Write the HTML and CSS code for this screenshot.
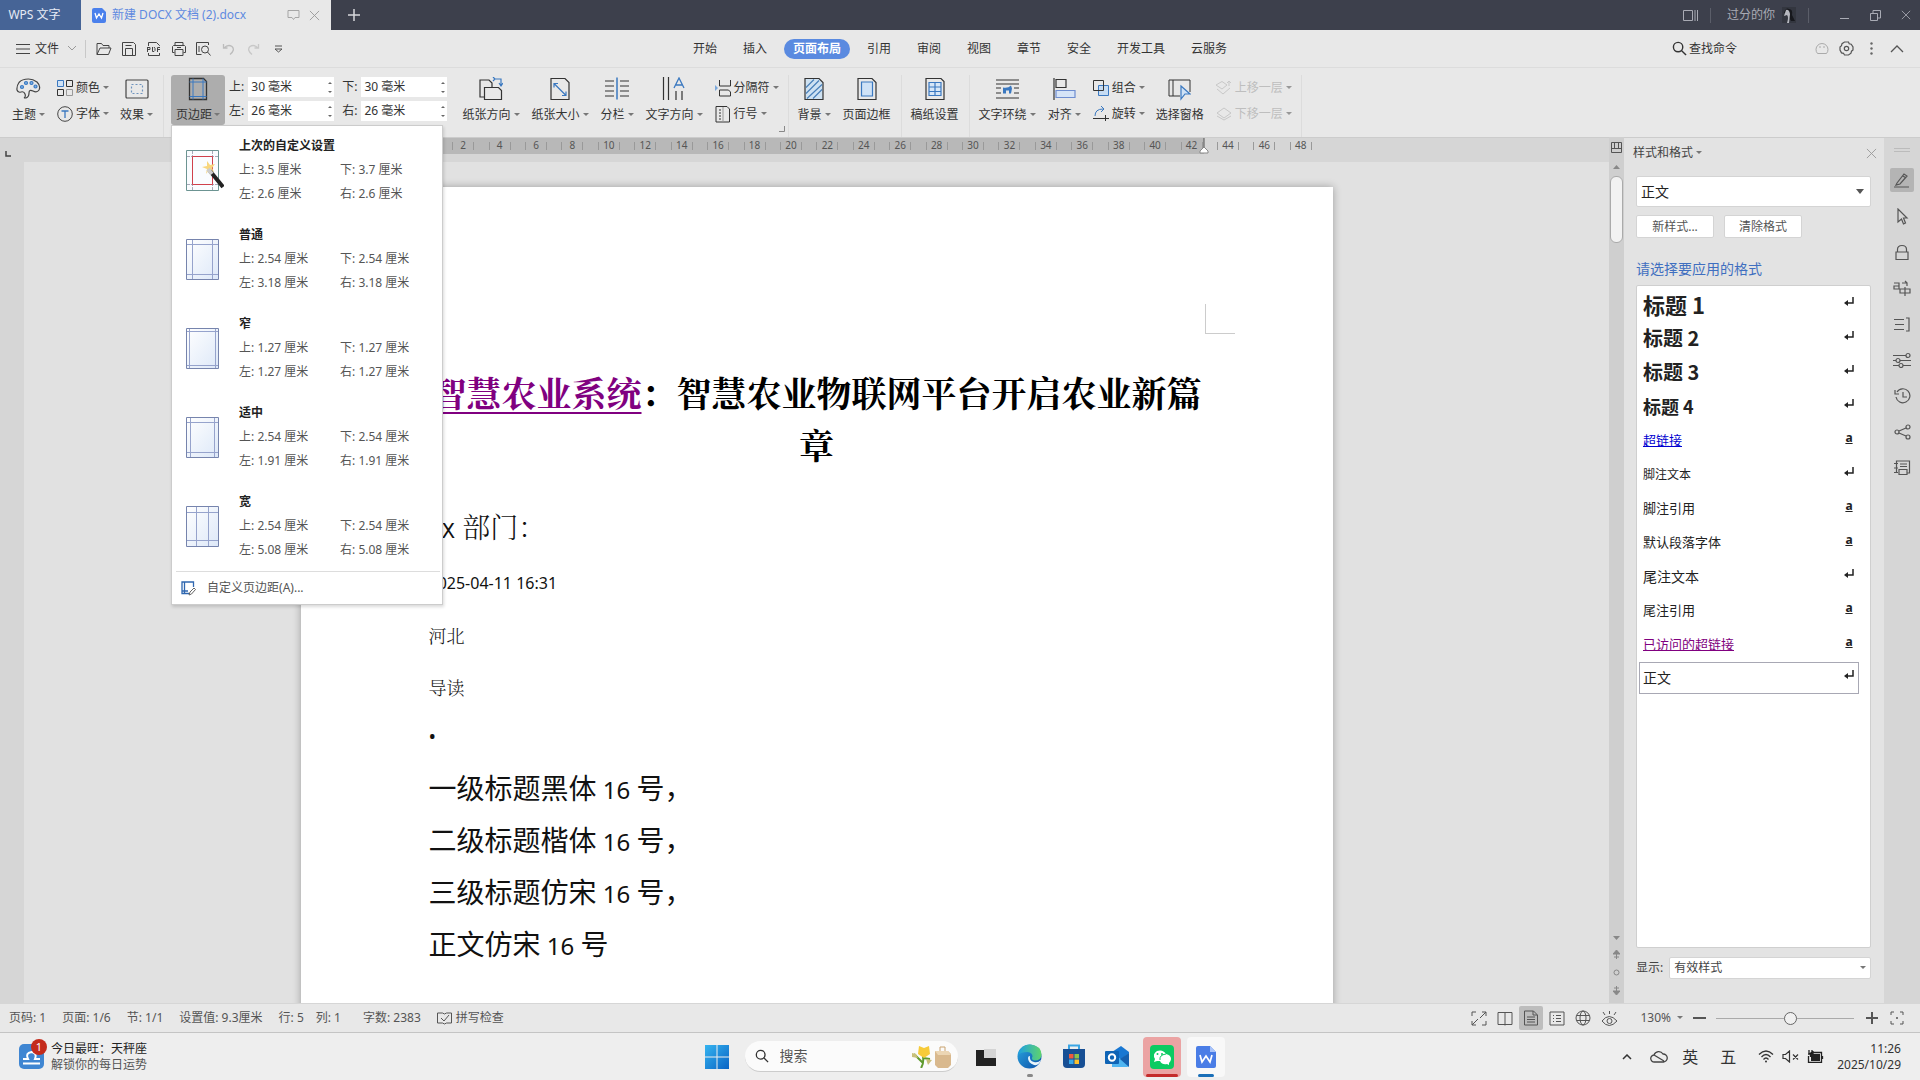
FILE: index.html
```html
<!DOCTYPE html>
<html lang="zh-CN">
<head>
<meta charset="utf-8">
<title>新建 DOCX 文档 (2).docx - WPS 文字</title>
<link rel="stylesheet" href="styles.css">
</head>
<body>
<svg class="defs" width="0" height="0" aria-hidden="true">
  <defs>
    <linearGradient id="sheet" x1="0" y1="0" x2="1" y2="1"><stop offset="0" stop-color="#fff"/><stop offset="1" stop-color="#dde8f8"/></linearGradient>
    <linearGradient id="win" x1="0" y1="0" x2="1" y2="1"><stop offset="0" stop-color="#35b4f0"/><stop offset="1" stop-color="#0a63c4"/></linearGradient>
    <linearGradient id="edge" x1="0" y1="0" x2="1" y2="1"><stop offset="0" stop-color="#2aa7e0"/><stop offset="1" stop-color="#0c4fa8"/></linearGradient>
    <linearGradient id="edgeTop" x1="0" y1="0" x2="1" y2="0"><stop offset="0" stop-color="#1d9fe2"/><stop offset="1" stop-color="#5fd46c"/></linearGradient>
    <symbol id="tri" viewBox="0 0 6 4"><path d="M0 0h6L3 3z" fill="#777"/></symbol>
    <symbol id="enter" viewBox="0 0 12 12"><path d="M10 1v6H4" fill="none" stroke="#222" stroke-width="1.5"/><path d="M5 4v6L1 7z" fill="#222"/></symbol>
    <symbol id="cross" viewBox="0 0 12 12"><path d="M1 1l10 10M11 1L1 11" fill="none" stroke="currentColor"/></symbol>
    <symbol id="mag" viewBox="0 0 16 16"><circle cx="6.500" cy="6.500" r="5" fill="none" stroke="currentColor" stroke-width="1.500"/><path d="M10.300 10.300L15 15" stroke="currentColor" stroke-width="1.500"/></symbol>
    <symbol id="wlogo" viewBox="0 0 14 15"><path d="M2 0h8l4 4v9a2 2 0 01-2 2H2a2 2 0 01-2-2V2a2 2 0 012-2z" fill="#4a80ec"/><path d="M3 5l1.500 5L7 6l2.500 4L11 5" fill="none" stroke="#fff" stroke-width="1.300"/></symbol>
  </defs>
</svg>

<div class="app">
  <header class="titlebar">
    <button class="home-tab">WPS 文字</button>
    <div class="doc-tab">
      <svg width="14" height="15"><use href="#wlogo"/></svg>
      <span class="doc-name">新建 DOCX 文档 (2).docx</span>
      <svg width="13" height="12" viewBox="0 0 13 12" fill="none" stroke="#a5a5a5"><path d="M1 1.500h11v7H8l-1.500 2-1.500-2H1z"/></svg>
      <button class="plain gray" aria-label="关闭标签"><svg width="11" height="11"><use href="#cross"/></svg></button>
    </div>
    <button class="plain new-tab" aria-label="新建标签"><svg width="12" height="12" viewBox="0 0 12 12" stroke="#d8d8dc" stroke-width="1.500"><path d="M6 0v12M0 6h12"/></svg></button>
    <div class="title-right">
      <svg width="15" height="13" viewBox="0 0 15 13" fill="none" stroke="#a9abb4"><path d="M.5 1.500h9v10h-9zM12 1v11M14.500 1v11"/></svg>
      <i class="vline dark"></i>
      <span class="user">过分的你</span>
      <svg class="avatar" width="14" height="16" viewBox="0 0 14 16"><rect width="14" height="16" fill="#33363f"/><path d="M2 6Q4 0 7 2Q11 2 10 8Q12 12 13 14H9Q7 11 7 8Q5 8 5 6Z" fill="#17181d"/><path d="M4 3q3-1 4 4l-1 9H5q2-6 0-8L2 9z" fill="#b6b8bf"/></svg>
      <i class="vline dark"></i>
      <button class="plain win" aria-label="最小化"><svg width="11" height="11" viewBox="0 0 11 11"><path d="M1 8.500h9" stroke="#a9abb4"/></svg></button>
      <button class="plain win" aria-label="还原"><svg width="11" height="11" viewBox="0 0 11 11" fill="none" stroke="#a9abb4"><path d="M.5 3.500h7v7h-7zM3 3V.5h7.500V8H8"/></svg></button>
      <button class="plain win" aria-label="关闭"><svg width="10" height="10"><use href="#cross"/></svg></button>
    </div>
  </header>

  <nav class="menubar">
    <div class="quick">
      <button class="plain file"><svg width="14" height="12" viewBox="0 0 14 12" stroke="#444"><path d="M0 1.500h14M0 6h14M0 10.500h14"/></svg>文件<svg class="caret" width="8" height="5" viewBox="0 0 8 5" fill="none" stroke="#999"><path d="M0 0l4 4 4-4"/></svg></button>
      <i class="vline"></i>
      <button class="plain q" aria-label="打开"><svg width="16" height="14" viewBox="0 0 16 14" fill="none" stroke="#444"><path d="M1 12.500V1.500h4.500l1.500 2h6v2.500M1 12.500l3-6.500h11l-2.500 6.500z"/></svg></button>
      <button class="plain q" aria-label="保存"><svg width="14" height="14" viewBox="0 0 14 14" fill="none" stroke="#444"><path d="M.5.5h11l2 2v11H.5zM3.500 13V6.500h7V13M3.500 3.500h6"/></svg></button>
      <button class="plain q" aria-label="输出为PDF"><svg width="14" height="14" viewBox="0 0 14 14" fill="none" stroke="#444"><path d="M1.500 4V.5h8l3 3V4M1.500 11v2.500h11V11M.5 5v5M1 5.500h2v2H1M5.500 5v4.500h1.500l1-1v-2l-1-1.500M10.500 10V5.500H13M10.500 7.500H13"/></svg></button>
      <button class="plain q" aria-label="打印"><svg width="14" height="14" viewBox="0 0 14 14" fill="none" stroke="#444"><path d="M3 3.500v-3h8v3M2.500 10.500H.5v-6l1-1h11l1 1v6h-2M3 7.500h8v6H3zM5 5.500h4"/></svg></button>
      <button class="plain q" aria-label="打印预览"><svg width="15" height="14" viewBox="0 0 15 14" fill="none" stroke="#444"><path d="M12.500 3V.5H.5v12h5M3 4v6"/><circle cx="9" cy="7.500" r="3.500"/><path d="M11.500 10l3 3.500"/></svg></button>
      <button class="plain q" aria-label="撤销"><svg width="13" height="12" viewBox="0 0 13 12" fill="none" stroke="#bcbcbc" stroke-width="1.300"><path d="M1.500 1v4h4M2 5q4-4 8-1.500 3.500 3.500-2 8"/></svg></button>
      <button class="plain q" aria-label="恢复"><svg width="13" height="12" viewBox="0 0 13 12" fill="none" stroke="#c8c8c8" stroke-width="1.300"><path d="M11.500 1v4h-4M11 5Q7 1 3 3.500-.5 7 5 11.500"/></svg></button>
      <button class="plain q" aria-label="自定义快速访问"><svg width="9" height="8" viewBox="0 0 9 8" fill="none" stroke="#555"><path d="M1 1h7M1 4l3.500 3L8 4z"/></svg></button>
    </div>
    <div class="tabs">
      <button>开始</button><button>插入</button><button class="on">页面布局</button><button>引用</button><button>审阅</button><button>视图</button><button>章节</button><button>安全</button><button>开发工具</button><button>云服务</button>
    </div>
    <div class="menu-right">
      <button class="plain find"><svg width="15" height="15"><use href="#mag"/></svg>查找命令</button>
      <button class="plain q" aria-label="反馈"><svg width="14" height="14" viewBox="0 0 14 14" fill="none" stroke="#aaa"><path d="M2.500 11.500a6 6 0 119 0zM5 4v2M9 4v2"/></svg></button>
      <button class="plain q" aria-label="设置"><svg width="15" height="15" viewBox="0 0 15 15" fill="none" stroke="#555" stroke-width="1.200"><path d="M5.500 1h4l.7 1.800 2 .4L14 6v3l-1.500 1.200-.5 2L9.500 14h-4l-1-1.700-2-.4L1 9V6l1.500-1.300.5-2z"/><circle cx="7.500" cy="7.500" r="2.200"/></svg></button>
      <button class="plain q" aria-label="更多"><svg width="3" height="13" viewBox="0 0 3 13" fill="#666"><circle cx="1.500" cy="1.500" r="1.200"/><circle cx="1.500" cy="6.500" r="1.200"/><circle cx="1.500" cy="11.500" r="1.200"/></svg></button>
      <button class="plain q" aria-label="折叠功能区"><svg width="14" height="8" viewBox="0 0 14 8" fill="none" stroke="#555" stroke-width="1.300"><path d="M1 7l6-6 6 6"/></svg></button>
    </div>
  </nav>

  <section class="ribbon">
    <button class="big"><svg width="25" height="22" viewBox="0 0 25 22" fill="none" stroke="#444" stroke-width="1.200"><path d="M10 20q3-1 3-5t4-2 6-1Q25 8 21 4 17 1 12.500 1 6 1 3 4.500.500 8 1 12q1 3 4 2t4 2-1 4z"/><g fill="#7ab0e6" stroke="#3a78c0"><circle cx="6" cy="9" r="1.500"/><circle cx="10" cy="5" r="1.500"/><circle cx="15.500" cy="5" r="1.500"/><circle cx="19.500" cy="8.500" r="1.500"/></g></svg><span>主题<svg width="6" height="4"><use href="#tri"/></svg></span></button>
    <div class="stack">
      <button class="small"><svg width="16" height="16" viewBox="0 0 16 16" fill="none" stroke="#333"><path d="M.5.5h6v6h-6z" stroke="#3a78c0" fill="#cfe2f6"/><path d="M9.500.5h6v6h-6zM.5 9.500h6v6h-6z"/><path d="M9.500 9.500h6v6h-6z" stroke="#999"/></svg>颜色<svg width="6" height="4"><use href="#tri"/></svg></button>
      <button class="small"><svg width="16" height="16" viewBox="0 0 16 16" fill="none" stroke="#444"><circle cx="8" cy="8" r="7.300"/><path d="M4.500 5h7M8 5v7" stroke="#3a78c0" stroke-width="1.300"/></svg>字体<svg width="6" height="4"><use href="#tri"/></svg></button>
    </div>
    <button class="big"><svg width="24" height="20" viewBox="0 0 24 20" fill="none" stroke="#444" stroke-width="1.200"><rect x="1" y="1" width="22" height="18" rx="1"/><rect x="6.500" y="5.500" width="11" height="9" stroke="#6f93bd" stroke-dasharray="2 2"/></svg><span>效果<svg width="6" height="4"><use href="#tri"/></svg></span></button>
    <i class="sep"></i>
    <div class="margin-wrap">
      <button class="big pressed" aria-expanded="true"><svg width="20" height="23" viewBox="0 0 20 23" fill="none" stroke="#333" stroke-width="1.300"><path d="M1.500 1h14l3 3v18h-17z"/><path d="M5 1v21M15 1v21M1.500 4.500h17M1.500 19h17" stroke="#3a78c0" stroke-width="1"/></svg><span>页边距<svg width="6" height="4"><use href="#tri"/></svg></span></button>
      <div class="menu" role="menu">
        <button class="preset"><svg width="38" height="42" viewBox="0 0 38 42" fill="none"><path d="M.5.5h32v40H.5z" fill="#fafcff" stroke="#6c9492"/><path d="M6.500 1v39M26.500 1v39M1 6.500h31M1 34.500h31" stroke="#a8a9b8" stroke-dasharray="3 1"/><path d="M6.500 6.500h20v28h-20z" stroke="#d0404c"/><path d="M21 19l-5-2 5-1 0-5 3 4 5-1-3 4 2 4-5-2-3 4z" fill="#f8d67e"/><path d="M24 21l13 16" stroke="#222" stroke-width="4"/><path d="M22 19l4 5" stroke="#ccc" stroke-width="4"/></svg><span class="preset-text"><b>上次的自定义设置</b><span>上: 3.5 厘米</span><span>下: 3.7 厘米</span><span>左: 2.6 厘米</span><span>右: 2.6 厘米</span></span></button>
        <button class="preset"><svg width="38" height="42" viewBox="0 0 38 42"><path d="M.5.5h32v40H.5z" fill="url(#sheet)" stroke="#7684ad"/><path d="M6.500 1v39M26.500 1v39M1 5.500h31M1 35.500h31" stroke="#96a3cc"/></svg><span class="preset-text"><b>普通</b><span>上: 2.54 厘米</span><span>下: 2.54 厘米</span><span>左: 3.18 厘米</span><span>右: 3.18 厘米</span></span></button>
        <button class="preset"><svg width="38" height="42" viewBox="0 0 38 42"><path d="M.5.5h32v40H.5z" fill="url(#sheet)" stroke="#7684ad"/><path d="M3.500 1v39M29.500 1v39M1 3.500h31M1 37.500h31" stroke="#96a3cc"/></svg><span class="preset-text"><b>窄</b><span>上: 1.27 厘米</span><span>下: 1.27 厘米</span><span>左: 1.27 厘米</span><span>右: 1.27 厘米</span></span></button>
        <button class="preset"><svg width="38" height="42" viewBox="0 0 38 42"><path d="M.5.5h32v40H.5z" fill="url(#sheet)" stroke="#7684ad"/><path d="M4.500 1v39M28.500 1v39M1 5.500h31M1 35.500h31" stroke="#96a3cc"/></svg><span class="preset-text"><b>适中</b><span>上: 2.54 厘米</span><span>下: 2.54 厘米</span><span>左: 1.91 厘米</span><span>右: 1.91 厘米</span></span></button>
        <button class="preset"><svg width="38" height="42" viewBox="0 0 38 42"><path d="M.5.5h32v40H.5z" fill="url(#sheet)" stroke="#7684ad"/><path d="M10.500 1v39M22.500 1v39M1 6.500h31M1 34.500h31" stroke="#96a3cc"/></svg><span class="preset-text"><b>宽</b><span>上: 2.54 厘米</span><span>下: 2.54 厘米</span><span>左: 5.08 厘米</span><span>右: 5.08 厘米</span></span></button>
        <button class="custom"><svg width="15" height="15" viewBox="0 0 15 15" fill="none" stroke="#2f67b0" stroke-width="1.300"><path d="M12.500 6V1H1v11.500h7M3.500 1v11M1 10h6"/><path d="M8 14l1-3 4-4 1.500 1.500-4 4.500z" stroke="#666" stroke-width="1"/></svg>自定义页边距(A)...</button>
      </div>
    </div>
    <div class="fields">
      <label for="mt">上:</label><span class="spin"><input id="mt" value="30 毫米"><svg width="6" height="13" viewBox="0 0 6 13" fill="#666"><path d="M1 3h4L3 1zM1 10h4l-2 2z"/></svg></span>
      <label for="mb">下:</label><span class="spin"><input id="mb" value="30 毫米"><svg width="6" height="13" viewBox="0 0 6 13" fill="#666"><path d="M1 3h4L3 1zM1 10h4l-2 2z"/></svg></span>
      <label for="ml">左:</label><span class="spin"><input id="ml" value="26 毫米"><svg width="6" height="13" viewBox="0 0 6 13" fill="#666"><path d="M1 3h4L3 1zM1 10h4l-2 2z"/></svg></span>
      <label for="mr">右:</label><span class="spin"><input id="mr" value="26 毫米"><svg width="6" height="13" viewBox="0 0 6 13" fill="#666"><path d="M1 3h4L3 1zM1 10h4l-2 2z"/></svg></span>
    </div>
    <button class="big"><svg width="24" height="24" viewBox="0 0 24 24" fill="none" stroke="#333" stroke-width="1.200"><path d="M5 20H1V3h9l3 3v4"/><path d="M5.500 10.500h14l3 3v9h-17z"/><path d="M16 2h6v6M14 4l2-2-2-2M20 6l2 3 2-3" stroke="#3a78c0"/></svg><span>纸张方向<svg width="6" height="4"><use href="#tri"/></svg></span></button>
    <button class="big"><svg width="20" height="23" viewBox="0 0 20 23" fill="none" stroke="#333" stroke-width="1.200"><path d="M1 1h14l4 4v17H1z"/><path d="M4 6l12 12M4 10V6h4M16 14v4h-4" stroke="#3a78c0"/></svg><span>纸张大小<svg width="6" height="4"><use href="#tri"/></svg></span></button>
    <button class="big"><svg width="26" height="23" viewBox="0 0 26 23" fill="none" stroke="#333" stroke-width="1.200"><path d="M1 3.500h9M1 8.500h9M1 13.500h9M1 18.500h9M16 3.500h9M16 8.500h9M16 13.500h9M16 18.500h9"/><path d="M13 0v22" stroke="#3a78c0" stroke-width="1.500"/></svg><span>分栏<svg width="6" height="4"><use href="#tri"/></svg></span></button>
    <button class="big"><svg width="24" height="24" viewBox="0 0 24 24" fill="none" stroke="#333" stroke-width="1.200"><path d="M1.500 0v23M6.500 0v23M14 14v9M20 14v9"/><path d="M12 11L17 1l5 10M14 8h6" stroke="#3a78c0" stroke-width="1.300"/></svg><span>文字方向<svg width="6" height="4"><use href="#tri"/></svg></span></button>
    <div class="stack">
      <button class="small"><svg width="16" height="17" viewBox="0 0 16 17" fill="none" stroke="#333"><path d="M4.500 0v6h11V0M15.500 16v-4l-2-2h-9v6z"/><path d="M0 5l3 3-3 3z" fill="#7aa8dc" stroke="none"/></svg>分隔符<svg width="6" height="4"><use href="#tri"/></svg></button>
      <button class="small"><svg width="16" height="17" viewBox="0 0 16 17" fill="none" stroke="#333"><path d="M1 .5h11l2.500 2.500v13H1z"/><path d="M5 3v11" stroke-dasharray="2 1"/><path d="M8 1v15" stroke="#999"/></svg>行号<svg width="6" height="4"><use href="#tri"/></svg></button>
    </div>
    <button class="plain launcher" aria-label="页面设置"><svg width="6" height="6" viewBox="0 0 6 6" fill="none" stroke="#888"><path d="M5.500 0v5.500H0"/></svg></button>
    <i class="sep"></i>
    <button class="big"><svg width="20" height="23" viewBox="0 0 20 23" fill="none" stroke="#333" stroke-width="1.200"><path d="M1 1h14l4 4v17H1z" fill="#cfe2f2"/><path d="M2 10L10 2M2 16L15 3M3 21L18 7M9 21l9-9" stroke="#4a80ba"/></svg><span>背景<svg width="6" height="4"><use href="#tri"/></svg></span></button>
    <button class="big"><svg width="20" height="23" viewBox="0 0 20 23" fill="none" stroke="#333" stroke-width="1.200"><path d="M1 1h14l4 4v17H1z"/><path d="M4.500 4.500h11v14h-11z" stroke="#3a78c0" fill="#cfe2f6"/></svg><span>页面边框</span></button>
    <i class="sep"></i>
    <button class="big"><svg width="20" height="23" viewBox="0 0 20 23" fill="none" stroke="#333" stroke-width="1.200"><path d="M1 1h15l3 3v18H1z"/><path d="M4 5h12v13H4zM4 9.500h12M4 14h12M10 5v13" stroke="#3a78c0" fill="#d6e6f7"/></svg><span>稿纸设置</span></button>
    <i class="sep"></i>
    <button class="big"><svg width="23" height="21" viewBox="0 0 23 21" fill="none" stroke="#333" stroke-width="1.200"><path d="M0 1.500h23M0 5.500h23M0 9.500h5M18 9.500h5M0 14.500h5M18 14.500h5M0 19.500h23"/><path d="M7 15V9q5 1 8-2l1 3-1 5h-2v-3h-3v3z" fill="#3a78c0" stroke="none"/></svg><span>文字环绕<svg width="6" height="4"><use href="#tri"/></svg></span></button>
    <button class="big"><svg width="23" height="22" viewBox="0 0 23 22" fill="none" stroke="#333" stroke-width="1.200"><path d="M1 0v22M3 1.500h10v8H3z"/><path d="M3 12.500h19v7H3z" stroke="#6f8ed0" fill="#d6e4f7"/></svg><span>对齐<svg width="6" height="4"><use href="#tri"/></svg></span></button>
    <div class="stack">
      <button class="small"><svg width="16" height="16" viewBox="0 0 16 16" fill="none" stroke="#333"><path d="M5.500 5.500h10v10h-10z" stroke="#3a78c0" fill="#c6dcf3"/><path d="M.5.5h10v10H.5z"/></svg>组合<svg width="6" height="4"><use href="#tri"/></svg></button>
      <button class="small"><svg width="16" height="16" viewBox="0 0 16 16" fill="none" stroke="#333"><path d="M0 12.500h16M12.500 9v6"/><path d="M2 10q0-7 8-7M8 0l3 3-3 3" stroke="#3a78c0"/></svg>旋转<svg width="6" height="4"><use href="#tri"/></svg></button>
    </div>
    <button class="big"><svg width="23" height="22" viewBox="0 0 23 22" fill="none" stroke="#333" stroke-width="1.200"><path d="M12 18H1V2h21v12M5 2v16" stroke-width="1"/><path d="M13 8l9 8h-5l-4 5z" stroke="#3a78c0" fill="#cfe2f6"/></svg><span>选择窗格</span></button>
    <div class="stack off">
      <button class="small" disabled><svg width="16" height="14" viewBox="0 0 16 14" fill="none" stroke="#bbb"><path d="M0 4l6-3.500L11 4 6 8zM1 8l6 5 7-6M13 5V0M11 2l2-2 2 2"/></svg>上移一层<svg width="6" height="4"><use href="#tri"/></svg></button>
      <button class="small" disabled><svg width="16" height="14" viewBox="0 0 16 14" fill="none" stroke="#bbb"><path d="M1 6l7-5 7 5-7 5zM1 9l7 4 7-4"/></svg>下移一层<svg width="6" height="4"><use href="#tri"/></svg></button>
    </div>
    <i class="sep"></i>
  </section>

  <main class="work">
    <section class="editor">
      <div class="ruler">
        <svg class="tabstop" width="6" height="6" viewBox="0 0 6 6" fill="none" stroke="#444" stroke-width="1.500"><path d="M1 0v5h5"/></svg>
        <div class="ruler-track">
          <div class="ruler-nums"><span>2</span><span>4</span><span>6</span><span>8</span><span>10</span><span>12</span><span>14</span><span>16</span><span>18</span><span>20</span><span>22</span><span>24</span><span>26</span><span>28</span><span>30</span><span>32</span><span>34</span><span>36</span><span>38</span><span>40</span><span>42</span><span>44</span><span>46</span><span>48</span></div>
          <svg class="indent" width="10" height="16" viewBox="0 0 10 16"><path d="M5 0v9" stroke="#555"/><path d="M1 15v-2l4-4 4 4v2z" fill="#fff" stroke="#888"/></svg>
        </div>
      </div>
      <div class="canvas">
        <article class="page">
          <i class="corner"></i>
          <h1><a href="#">智慧农业系统</a>：智慧农业物联网平台开启农业新篇章</h1>
          <p class="dept"><span>XX</span> 部门：</p>
          <p class="date">2025-04-11 16:31</p>
          <p class="song">河北</p>
          <p class="song">导读</p>
          <p class="dot">•</p>
          <p class="hei">一级标题黑体 <span>16</span> 号，</p>
          <p class="hei">二级标题楷体 <span>16</span> 号，</p>
          <p class="hei">三级标题仿宋 <span>16</span> 号，</p>
          <p class="hei">正文仿宋 <span>16</span> 号</p>
        </article>
      </div>
    </section>

    <div class="scroll">
      <svg width="11" height="11" viewBox="0 0 11 11" fill="none" stroke="#555"><path d="M.5.5h10v10H.5zM1 6.500h9M3.500 1v5M7.500 1v5"/></svg>
      <svg width="7" height="4" viewBox="0 0 7 4"><path d="M0 4h7L3.500 0z" fill="#888"/></svg>
      <i class="thumb"></i>
      <div class="scroll-end">
        <svg width="7" height="4" viewBox="0 0 7 4"><path d="M0 0h7L3.500 4z" fill="#888"/></svg>
        <svg width="7" height="9" viewBox="0 0 7 9"><path d="M0 4h7L3.500 0zM1 7h5M3.500 4v5" fill="#888" stroke="#888"/></svg>
        <svg width="7" height="7" viewBox="0 0 7 7"><circle cx="3.500" cy="3.500" r="2.500" fill="none" stroke="#888"/></svg>
        <svg width="7" height="9" viewBox="0 0 7 9"><path d="M0 5h7L3.500 9zM1 2h5M3.500 0v5" fill="#888" stroke="#888"/></svg>
      </div>
    </div>

    <aside class="panel">
      <div class="panel-head"><span>样式和格式<svg width="6" height="4"><use href="#tri"/></svg></span><button class="plain gray" aria-label="关闭窗格"><svg width="11" height="11"><use href="#cross"/></svg></button></div>
      <div class="combo tall"><select aria-label="当前样式"><option>正文</option></select><svg width="8" height="5" viewBox="0 0 8 5"><path d="M0 0h8L4 5z" fill="#555"/></svg></div>
      <div class="panel-btns"><button>新样式...</button><button>清除格式</button></div>
      <h2>请选择要应用的格式</h2>
      <ul class="styles">
        <li><span class="s22">标题 1</span><svg width="12" height="12"><use href="#enter"/></svg></li>
        <li><span class="s20">标题 2</span><svg width="12" height="12"><use href="#enter"/></svg></li>
        <li><span class="s20">标题 3</span><svg width="12" height="12"><use href="#enter"/></svg></li>
        <li><span class="s18">标题 4</span><svg width="12" height="12"><use href="#enter"/></svg></li>
        <li><span class="s13 link">超链接</span><u>a</u></li>
        <li><span class="s12">脚注文本</span><svg width="12" height="12"><use href="#enter"/></svg></li>
        <li><span class="s13">脚注引用</span><u>a</u></li>
        <li><span class="s13">默认段落字体</span><u>a</u></li>
        <li><span class="s14">尾注文本</span><svg width="12" height="12"><use href="#enter"/></svg></li>
        <li><span class="s13">尾注引用</span><u>a</u></li>
        <li><span class="s13 visited">已访问的超链接</span><u>a</u></li>
        <li class="sel"><span class="s14">正文</span><svg width="12" height="12"><use href="#enter"/></svg></li>
      </ul>
      <div class="show"><label for="show">显示:</label><div class="combo"><select id="show"><option>有效样式</option></select><svg width="6" height="4"><use href="#tri"/></svg></div></div>
    </aside>

    <div class="tools">
      <svg class="grip" width="16" height="4" viewBox="0 0 16 4" stroke="#bbb"><path d="M0 .5h16M0 3.500h16"/></svg>
      <button class="on" aria-label="样式"><svg width="18" height="16" viewBox="0 0 18 16"><path d="M1 15h15M4 11l7-9 3 2-7 8-4 1zM10 4l3 2"/></svg></button>
      <button aria-label="选择"><svg width="14" height="17" viewBox="0 0 14 17"><path d="M3 1v13l3.500-3 2 5 2-1-2-5H12z"/></svg></button>
      <button aria-label="限制编辑"><svg width="16" height="17" viewBox="0 0 16 17"><path d="M2 8h12v7.500H2zM3.500 8V5.500q0-4 4.500-4t4.500 4V8"/></svg></button>
      <button aria-label="翻译"><svg width="18" height="17" viewBox="0 0 18 17"><path d="M1 3h5v6H1V6h5M9 3h5v3M12 1l2 2M7 9h10v4H7zM12 7v9"/></svg></button>
      <button aria-label="导航"><svg width="16" height="15" viewBox="0 0 16 15"><path d="M0 2.500h10M1 7.500h9M0 12.500h10M12 1h3v13h-3"/></svg></button>
      <button aria-label="属性"><svg width="18" height="16" viewBox="0 0 18 16"><path d="M0 3.500h13M0 8.500h3M7 8.500h11M0 13.500h6M10 13.500h8"/><circle cx="15" cy="3.500" r="2"/><circle cx="5" cy="8.500" r="2"/><circle cx="8" cy="13.500" r="2"/></svg></button>
      <button aria-label="历史"><svg width="17" height="16" viewBox="0 0 17 16"><path d="M3 4a7 7 0 11-1 5M1 2v4h4M9 4v5h4"/></svg></button>
      <button aria-label="分享"><svg width="17" height="16" viewBox="0 0 17 16"><circle cx="3" cy="8" r="2"/><circle cx="14" cy="3" r="2"/><circle cx="14" cy="13" r="2"/><path d="M5 7l7-3M5 9l7 3"/></svg></button>
      <button aria-label="文档库"><svg width="17" height="16" viewBox="0 0 17 16"><path d="M2.500 13V1h13v12h-3M0 3.500h4M0 8h4M0 12.500h4M6 4h7M6 6.500h7M5 9.500h8v5H5z"/></svg></button>
    </div>
  </main>

  <footer class="status">
    <span>页码: 1</span><span>页面: 1/6</span><span>节: 1/1</span><span>设置值: 9.3厘米</span><span>行: 5</span><span class="near">列: 1</span><span class="far">字数: 2383</span>
    <button class="plain spell"><svg width="15" height="13" viewBox="0 0 15 13" fill="none" stroke="#555"><path d="M.5 1h5l2 1 2-1h5v10h-5l-2 1-2-1h-5zM4 6l3 3 5-6"/></svg>拼写检查</button>
    <div class="views">
      <button class="plain" aria-label="全屏"><svg width="16" height="15" viewBox="0 0 16 15"><path d="M1 5V1h4M15 10v4h-4M11 1h4v4M5 14H1v-4M15 1L9 7M1 14l6-6"/></svg></button>
      <button class="plain" aria-label="阅读"><svg width="16" height="15" viewBox="0 0 16 15"><path d="M1 1.500h14v12H1zM8 1.500v13"/></svg></button>
      <button class="plain on" aria-label="页面"><svg width="16" height="16" viewBox="0 0 16 16"><path d="M1.500 1h9l4 4v10h-13zM10 1v4h4M4 7h8M4 9.500h8M4 12h8"/></svg></button>
      <button class="plain" aria-label="大纲"><svg width="16" height="15" viewBox="0 0 16 15"><path d="M1 1h14v13H1zM4 4.500h1M7 4.500h5M4 7.500h1M7 7.500h5M4 10.500h1M7 10.500h5"/></svg></button>
      <button class="plain" aria-label="网页"><svg width="16" height="16" viewBox="0 0 16 16"><circle cx="8" cy="8" r="7"/><ellipse cx="8" cy="8" rx="3" ry="7"/><path d="M1.500 5.500h13M1.500 10.500h13"/></svg></button>
      <button class="plain" aria-label="护眼"><svg width="17" height="17" viewBox="0 0 17 17"><path d="M1 11q7-9 15 0-8 9-15 0zM8.500 4V1M4 5L2 2M13 5l2-3"/><circle cx="8.500" cy="11" r="2.500"/></svg></button>
    </div>
    <button class="plain zoom">130%<svg width="6" height="4"><use href="#tri"/></svg></button>
    <button class="plain" aria-label="缩小"><svg width="13" height="2" viewBox="0 0 13 2"><path d="M0 1h13" stroke-width="2"/></svg></button>
    <input class="slider" type="range" min="0" max="100" value="54" aria-label="缩放">
    <button class="plain" aria-label="放大"><svg width="12" height="12" viewBox="0 0 12 12"><path d="M6 0v12M0 6h12" stroke-width="2"/></svg></button>
    <button class="plain fit" aria-label="适合"><svg width="14" height="14" viewBox="0 0 14 14"><path d="M1 4V1h3M10 1h3v3M13 10v3h-3M4 13H1v-3M6 7h2M7 6v2"/></svg></button>
  </footer>
</div>

<footer class="taskbar">
  <a class="widget" href="#">
    <span class="wicon"><svg width="25" height="25" viewBox="0 0 25 25"><rect width="25" height="25" rx="5" fill="#3f86d2"/><path d="M4 19.500h17M4 15h5q-3-6 3.500-7 6 1 3.500 7h5" fill="none" stroke="#fff" stroke-width="2"/></svg><i class="badge">1</i></span>
    <span class="wtext"><span>今日最旺：天秤座</span><span class="dim">解锁你的每日运势</span></span>
  </a>
  <div class="dock">
    <button class="plain" aria-label="开始菜单"><svg width="24" height="24" viewBox="0 0 24 24"><path d="M0 0h11.500v11.500H0zM12.500 0H24v11.500H12.500zM0 12.500h11.500V24H0zM12.500 12.500H24V24H12.500z" fill="url(#win)"/></svg></button>
    <label class="search"><svg width="14" height="14"><use href="#mag"/></svg><input type="text" placeholder="搜索" aria-label="搜索"><svg width="42" height="24" viewBox="0 0 42 24"><path d="M13 12q1 8-2 12M13 14l7 1M13 19L4 10" stroke="#5f9a2e" stroke-width="2" fill="none"/><path d="M9 2l5 2 5-2 1 8-6 4-6-4z" fill="#f7cb3a"/><path d="M2 9l4 1 2 4-6-1zM16 15l6 1-4 5z" fill="#c9c07a"/><path d="M25 7h13l3 3v11l-3 3H28l-3-3z" fill="#d9b98e"/><path d="M25 7l3 4h13l-3-4z" fill="#ecd6b4"/><path d="M30 7V3h5v4" fill="none" stroke="#c9a26e"/></svg></label>
    <button class="plain app-btn" aria-label="任务视图"><svg width="20" height="20" viewBox="0 0 20 20"><path d="M8 2h12v12H8z" fill="#d4d4d4"/><path d="M0 3h8v8h12v8H0z" fill="#222"/></svg></button>
    <button class="plain app-btn run" aria-label="Edge"><svg width="25" height="25" viewBox="0 0 25 25"><circle cx="12.500" cy="12.500" r="12" fill="url(#edge)"/><path d="M1 11Q3 1 13 .5q11 1 11.500 10 0 6-7 6-4-1-2-4 0-4-5-4.500Q4 8 1 11z" fill="url(#edgeTop)"/><path d="M13 12q-1 5 4 6 4 1 7-2-2 6-7 5-6-2-6-7 0-2 2-2z" fill="#e9f5fb"/></svg></button>
    <button class="plain app-btn" aria-label="应用商店"><svg width="24" height="25" viewBox="0 0 24 25"><path d="M7 6V1.500h10V6" fill="none" stroke="#3aa5e4" stroke-width="2"/><path d="M1 5h22v15a4 4 0 01-4 4H5a4 4 0 01-4-4z" fill="#174f94"/><path d="M7 10h4.500v4.500H7z" fill="#ee5b3c"/><path d="M12.500 10H17v4.500h-4.500z" fill="#8bc34a"/><path d="M7 15.500h4.500V20H7z" fill="#35a9ea"/><path d="M12.500 15.500H17V20h-4.500z" fill="#fbc02d"/></svg></button>
    <button class="plain app-btn" aria-label="Outlook"><svg width="25" height="24" viewBox="0 0 25 24"><path d="M7 7l9-6 8 6v13H7z" fill="#1877d2"/><path d="M7 8l9 6 8-6v12a2 2 0 01-2 2H7z" fill="#4fb5f1"/><path d="M15 14l9 8V8z" fill="#155fae"/><rect y="6" width="14" height="13" rx="1" fill="#0f64b5"/><circle cx="7" cy="12.500" r="3.200" fill="none" stroke="#fff" stroke-width="2"/></svg></button>
    <button class="plain app-btn alert" aria-label="微信"><svg width="24" height="24" viewBox="0 0 24 24"><rect width="24" height="24" rx="4" fill="#0ccb62"/><path d="M4 17l1-3q-3-5 2-8 6-2 9 3 5 1 5 5 0 2-2 4v2l-2-1q-5 1-7-3l-3 0z" fill="#fff"/><path d="M10 15q-1-5 6-6" stroke="#0ccb62" fill="none"/><circle cx="7.500" cy="9" r="1" fill="#0ccb62"/><circle cx="12" cy="9" r="1" fill="#0ccb62"/></svg></button>
    <button class="plain app-btn active" aria-label="WPS"><svg width="20" height="22" viewBox="0 0 20 22"><path d="M2 0h12l6 6v14a2 2 0 01-2 2H2a2 2 0 01-2-2V2a2 2 0 012-2z" fill="#4a7de6"/><path d="M14 0v6h6z" fill="#a8c3fa"/><path d="M4 9l2 7 4-6 4 6 2-7" fill="none" stroke="#fff" stroke-width="1.700"/></svg></button>
  </div>
  <div class="tray">
    <svg width="10" height="6" viewBox="0 0 10 6" fill="none" stroke="#333" stroke-width="1.500"><path d="M1 5l4-4 4 4"/></svg>
    <svg width="18" height="13" viewBox="0 0 18 13" fill="none" stroke="#444" stroke-width="1.300"><path d="M4.500 12a3.500 3.500 0 01-.5-7 5 5 0 019-1 4 4 0 01.5 8zM4 5l10 6"/></svg>
    <span class="ime">英</span><span class="ime two">五</span>
    <div class="net">
      <svg width="16" height="13" viewBox="0 0 16 13" fill="none" stroke="#333" stroke-width="1.300"><path d="M1 4.500q7-7 14 0M3.500 7q4.500-5 9 0M5.500 9.500q2.500-3 5 0"/><circle cx="8" cy="11.500" r="1" fill="#333" stroke="none"/></svg>
      <svg width="17" height="13" viewBox="0 0 17 13" fill="none" stroke="#333" stroke-width="1.200"><path d="M1 4.500v4h2.500L7.500 12V1L3.500 4.500zM11 4.500l5 5M16 4.500l-5 5"/></svg>
      <svg width="17" height="13" viewBox="0 0 17 13"><path d="M4 4h9v7H4z" fill="#222"/><path d="M1.500 6v6.500h13v-10H6M15.500 6v3" fill="none" stroke="#222" stroke-width="1.300"/><path d="M1 4h5V1M2 0v3M5 0v3M3.500 4v3" stroke="#222" stroke-width="1.300"/></svg>
    </div>
    <div class="clock"><span>11:26</span><span>2025/10/29</span></div>
  </div>
</footer>
</body>
</html>
```
FILE: styles.css
```css
* { box-sizing: border-box; }
html, body { height: 100%; }
body {
  margin: 0;
  display: flex;
  flex-direction: column;
  overflow: hidden;
  font: 12px/16px "Noto Sans", "Noto Sans CJK SC", sans-serif;
  color: #444;
  background: #e8e8e8;
}
button, input, select { font: inherit; color: inherit; }
button { border: 0; background: none; padding: 0; white-space: nowrap; }
svg { display: block; flex: none; }
.defs { position: absolute; }
.plain { display: flex; align-items: center; }
.gray { color: #999; }
.app { flex: 1; min-height: 0; display: flex; flex-direction: column; }
.vline { width: 1px; height: 18px; background: #c8c8c8; }
.vline.dark { height: 15px; background: #5b5e69; }

/* title bar */
.titlebar { display: flex; height: 30px; background: #3d404c; flex: none; }
.home-tab { width: 81px; padding-right: 12px; background: #466496; color: #e6ebf5; }
.doc-tab { display: flex; align-items: center; width: 250px; padding: 0 11px; background: #e8e8e8; color: #5f8ae0; }
.doc-name { flex: 1; padding-left: 6px; }
.doc-tab .plain { margin-left: 9px; }
.new-tab { margin-left: 17px; }
.title-right { margin-left: auto; display: flex; align-items: center; padding-right: 9px; color: #a9abb4; }
.title-right .vline { margin-left: 12px; }
.user { margin-left: 16px; }
.avatar { margin-left: 7px; }
.title-right .vline + .win { margin-left: 30px; }
.win { margin-left: 20px; }

/* menu bar */
.menubar { display: grid; grid-template-columns: 1fr auto 1fr; align-items: center; height: 38px; padding: 0 11px; flex: none; border-bottom: 1px solid #dcdcdc; }
.quick, .menu-right, .tabs { display: flex; align-items: center; }
.quick { padding-left: 5px; }
.file { gap: 5px; color: #333; margin-right: 9px; }
.file .caret { margin-left: 4px; }
.quick .vline { margin-right: 5px; }
.q { width: 25px; justify-content: center; }
.tabs { gap: 8px; }
.tabs button { height: 20px; padding: 0 9px; border-radius: 10px; color: #333; }
.tabs .on { background: #5a8ae0; color: #fff; font-weight: bold; }
.menu-right { justify-content: flex-end; }
.find { color: #333; gap: 2px; margin-right: 72px; }

/* ribbon */
.ribbon { display: flex; height: 69px; padding: 7px 0 0 6px; flex: none; color: #333; }
.big { display: flex; flex-direction: column; align-items: center; height: 50px; padding: 2px 6px 0; color: #333; }
.big > svg { height: 24px; margin-bottom: 5px; }
.big > span, .small { display: flex; align-items: center; gap: 3px; line-height: 18px; }
.sep { width: 1px; height: 64px; margin: 0 3px 0 4px; background: #dcdcdc; }
.stack { display: flex; flex-direction: column; gap: 8px; padding: 4px 5px 0 6px; }
.small { height: 18px; color: #333; }
.off .small { color: #bebebe; }
.off .small svg { opacity: .7; }
.pressed { background: #adadad; border-radius: 3px; padding: 2px 3px 0; width: 54px; }
.pressed > span { gap: 2px; }
.margin-wrap { position: relative; margin-left: 4px; }
.fields { display: grid; grid-template-columns: auto 86px auto 86px; gap: 4px; align-content: start; align-items: center; padding: 2px 9px 0 4px; }
.fields label:nth-of-type(even) { padding-left: 4px; }
.spin { display: flex; align-items: center; height: 20px; background: #fff; padding: 0 1px 0 3px; }
.spin input { flex: 1; min-width: 0; border: 0; padding: 0; background: none; outline: 0; color: #333; }
.launcher { align-self: flex-end; margin: 0 -1px 5px -5px; }

/* margin presets */
.menu { position: absolute; z-index: 5; top: 50px; left: 0; width: 272px; background: #fff; border: 1px solid #ccc; box-shadow: 1px 2px 3px rgba(0,0,0,.15); }
.preset { display: flex; width: 100%; height: 89px; padding: 8px 0 0 14px; text-align: left; align-items: flex-start; color: #555; }
.preset > svg { margin-top: 16px; }
.preset-text { display: grid; grid-template-columns: 101px auto; line-height: 24px; margin-left: 15px; }
.preset-text b { grid-column: 1 / -1; color: #222; }
.custom { display: flex; align-items: center; gap: 11px; width: 264px; height: 33px; margin: 0 4px; padding-left: 5px; border-top: 1px solid #ddd; color: #555; }

/* work area */
.work { flex: 1; min-height: 0; display: flex; }
.editor { flex: 1; min-width: 0; display: flex; flex-direction: column; background: #d6d6d6; border-top: 1px solid #ccc; }
.ruler { display: flex; height: 24px; flex: none; padding-left: 5px; }
.tabstop { margin-top: 13px; }
.ruler-track { position: relative; height: 16px; width: 776px; margin-left: 417px; background: #b8b8b8; }
.ruler-nums { display: grid; grid-template-columns: repeat(24, 1fr); width: 874px; margin-left: 17px; }
.ruler-nums span { justify-self: center; width: 22px; height: 8px; margin-top: 4px; border: solid #999; border-width: 0 1px; font-size: 10px; line-height: 6px; text-align: center; color: #555; }
.indent { position: absolute; right: -5px; top: 0; }
.canvas { flex: 1; min-height: 0; display: flex; justify-content: center; overflow: hidden; margin-left: 24px; padding: 25px 0 0; background: #e1e1e1; }
.page { position: relative; width: 1032px; height: 1459px; padding: 179px 128px 0; background: #fff; box-shadow: 0 0 8px rgba(0,0,0,.3); color: #111; font-family: "Noto Sans CJK SC", sans-serif; }
.corner { position: absolute; right: 98px; top: 117px; width: 30px; height: 30px; border: solid #ccc; border-width: 0 0 1px 1px; }
.page h1, .page p { margin: 0; line-height: 52px; }
.page h1 { font: bold 35px/52px "Noto Serif CJK SC", "Noto Sans CJK SC", serif; text-align: center; color: #000; }
.page h1 a { color: #800080; text-underline-offset: 5px; text-decoration-thickness: 2px; }
.page .dept { margin: 30px 0 5px; font-size: 28px; font-family: "Noto Serif CJK SC", "Noto Sans CJK SC", serif; font-weight: 300; }
.dept span { font: 22px "Liberation Mono", monospace; }
.page .date { font: 16px/52px "Noto Sans", sans-serif; }
.page .song { font-size: 18px; font-family: "Noto Serif CJK SC", "Noto Sans CJK SC", serif; font-weight: 300; }
.page .dot { font: 20px/48px "Noto Sans", sans-serif; }
.hei { font-size: 28px; }
.hei span { font: 24px "Noto Sans", sans-serif; }

/* scroll bar */
.scroll { width: 15px; display: flex; flex-direction: column; align-items: center; background: #cfcfcf; padding-top: 5px; }
.scroll > svg + svg { margin-top: 12px; }
.thumb { width: 13px; height: 67px; margin-top: 7px; border: 1px solid #aaa; border-radius: 6px; background: #f2f2f2; }
.scroll-end { margin-top: auto; display: flex; flex-direction: column; align-items: center; gap: 10px; padding-bottom: 8px; }

/* style panel */
.panel { width: 260px; display: flex; flex-direction: column; padding: 0 13px 24px 12px; background: #e3e3e3; border-top: 1px solid #ccc; }
.panel-head { display: flex; justify-content: space-between; align-items: center; height: 30px; margin: 0 -6px 8px -3px; }
.panel-head span { display: flex; align-items: center; gap: 3px; }
.combo { display: flex; align-items: center; flex: 1; background: #fff; border: 1px solid #d4d4d4; height: 22px; padding-right: 4px; border-radius: 2px; }
.combo.tall { flex: none; height: 31px; font-size: 14px; padding-right: 6px; color: #222; }
.combo select { flex: 1; appearance: none; border: 0; background: none; padding: 0 0 0 4px; outline: 0; }
.panel-btns { display: flex; gap: 10px; margin-top: 8px; }
.panel-btns button { width: 78px; height: 23px; background: #fff; border: 1px solid #d4d4d4; border-radius: 2px; color: #555; }
.panel h2 { margin: 19px 0 6px; font: 14px/22px "Noto Sans CJK SC", sans-serif; color: #3f6fc0; }
.styles { flex: 1; min-height: 0; margin: 0 0 9px; padding: 2px 11px 0 2px; list-style: none; background: #fff; border: 1px solid #cfcfcf; border-radius: 2px; color: #222; font-family: "Noto Sans CJK SC", sans-serif; }
.styles li { display: flex; justify-content: space-between; align-items: center; height: 34px; padding: 0 4px; line-height: 32px; }
.styles li > span { margin-bottom: 2px; }
.styles li > svg, .styles li > u { margin-bottom: 6px; }
.styles u { width: 12px; text-align: center; font: bold 12px/16px "Noto Sans", sans-serif; }
.styles .sel { border: 1px solid #a8a8b4; padding: 0 3px; height: 32px; }
.s22 { font-size: 22px; font-weight: bold; }
.s20 { font-size: 20px; font-weight: bold; }
.s18 { font-size: 18px; font-weight: bold; }
.s14 { font-size: 14px; }
.s13 { font-size: 13px; }
.s12 { font-size: 12px; }
.link { color: #0000d0; text-decoration: underline; }
.visited { color: #800080; text-decoration: underline; }
.show { display: flex; align-items: center; gap: 6px; }

/* side tools */
.tools { width: 36px; display: flex; flex-direction: column; align-items: center; gap: 12px; background: #d6d6d6; border-top: 1px solid #ccc; padding-top: 10px; }
.tools .grip { margin-bottom: 4px; }
.tools button { display: flex; align-items: center; justify-content: center; width: 24px; height: 24px; border-radius: 2px; }
.tools .on { background: #b4b4b4; }
.tools button svg { fill: none; stroke: #555; stroke-width: 1.2; }

/* status bar */
.status { display: flex; align-items: center; height: 30px; flex: none; padding: 0 16px 0 9px; gap: 16px; border-top: 1px solid #d6d6d6; border-bottom: 1px solid #c4c4c4; color: #555; }
.status svg { fill: none; stroke: #555; }
.status .near { margin-left: -4px; }
.status .far { margin-left: 6px; }
.spell { gap: 4px; }
.views { margin-left: auto; display: flex; gap: 2px; }
.views button { width: 24px; height: 24px; justify-content: center; }
.views .on { background: #bdbdbd; border-radius: 2px; }
.zoom { gap: 6px; margin: 0 -6px 0 3px; }
.status .zoom svg { stroke: none; }
.slider { width: 138px; height: 14px; margin: 0 -4px 0 -6px; appearance: none; background: linear-gradient(#aaa, #aaa) center / 100% 1px no-repeat; }
.slider::-webkit-slider-thumb { appearance: none; width: 13px; height: 13px; border-radius: 50%; border: 1px solid #666; background: #f0f0f0; }
.fit { margin-left: -4px; }

/* taskbar */
.taskbar { display: grid; grid-template-columns: 1fr auto 1fr; align-items: center; height: 47px; flex: none; padding: 0 19px; background: #eee; }
.widget { display: flex; align-items: center; gap: 7px; color: #222; text-decoration: none; }
.wicon { position: relative; }
.badge { position: absolute; top: -5px; right: -3px; width: 16px; height: 16px; border-radius: 50%; background: #c42b1c; color: #fff; font-style: normal; font-size: 11px; text-align: center; }
.wtext, .clock { display: flex; flex-direction: column; }
.dim { color: #555; }
.dock { display: flex; align-items: center; gap: 6px; padding-left: 9px; }
.search { display: flex; align-items: center; width: 213px; height: 31px; margin: 0 3px 0 10px; padding: 0 6px 0 10px; border-radius: 16px; background: #fbfbfb; border-bottom: 1px solid #ccc; color: #333; }
.search input { flex: 1; min-width: 0; border: 0; background: none; outline: 0; padding: 0 0 0 11px; font-size: 14px; }
.search input::placeholder { color: #555; }
.app-btn { justify-content: center; width: 38px; height: 40px; border-radius: 4px; position: relative; }
.alert { background: #eba3a3; }
.active { background: #f8f8f8; }
.run::after, .alert::after, .active::after { content: ""; position: absolute; bottom: 0; width: 16px; height: 3px; border-radius: 2px; background: #1a6fb8; }
.run::after { width: 6px; background: #888; }
.alert::after { width: 32px; background: #c42b2b; }
.tray { display: flex; align-items: center; justify-content: flex-end; color: #333; }
.tray > svg + svg { margin-left: 18px; }
.ime { font-size: 16px; margin-left: 14px; }
.ime.two { margin-left: 22px; }
.net { display: flex; gap: 8px; margin: 0 13px 0 22px; }
.clock { text-align: right; }
```
